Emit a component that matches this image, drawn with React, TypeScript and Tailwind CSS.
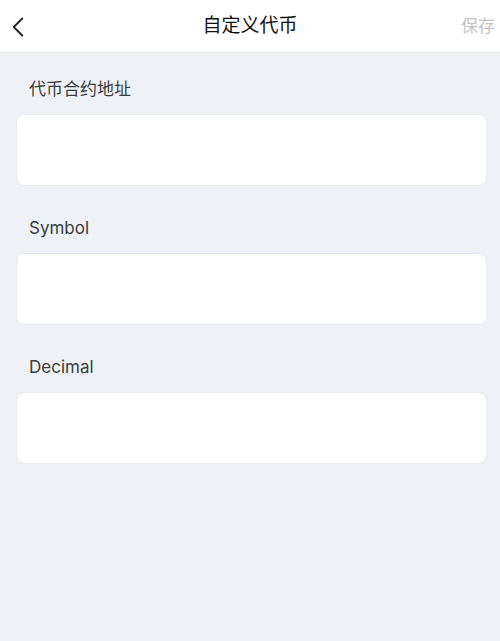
import { ChevronLeft } from "lucide-react";

const fields = ["代币合约地址", "Symbol", "Decimal"];

export default function App() {
  return (
    <div
      className="min-h-[641px] w-[500px] bg-[#eef1f5] text-[#333]"
      style={{ fontFamily: '"Inter", "Noto Sans CJK SC", sans-serif' }}
    >
      {/* top bar */}
      <div className="relative flex h-[53px] items-center justify-center border-b border-[#e9ebee] bg-white">
        <ChevronLeft className="absolute left-[1px] top-[10px] h-[34px] w-[34px] text-[#222]" strokeWidth={1.3} />
        <span className="text-[19px] text-[#111]">自定义代币</span>
        <span className="absolute right-[5px] top-[14px] text-[17px] text-[#c3c3c3]">保存</span>
      </div>

      <div className="flex flex-col pt-[24px]">
        {fields.map((label, i) => (
          <div key={label} className={i > 0 ? "mt-[30px]" : ""}>
            <div className="ml-[29px] h-[24px] text-[17px] leading-[24px] text-[#3b3d40]">{label}</div>
            <div className="ml-[16px] mt-[13px] h-[72px] w-[471px] rounded-[8px] border border-[#e8e9ee] bg-white" />
          </div>
        ))}
      </div>
    </div>
  );
}
